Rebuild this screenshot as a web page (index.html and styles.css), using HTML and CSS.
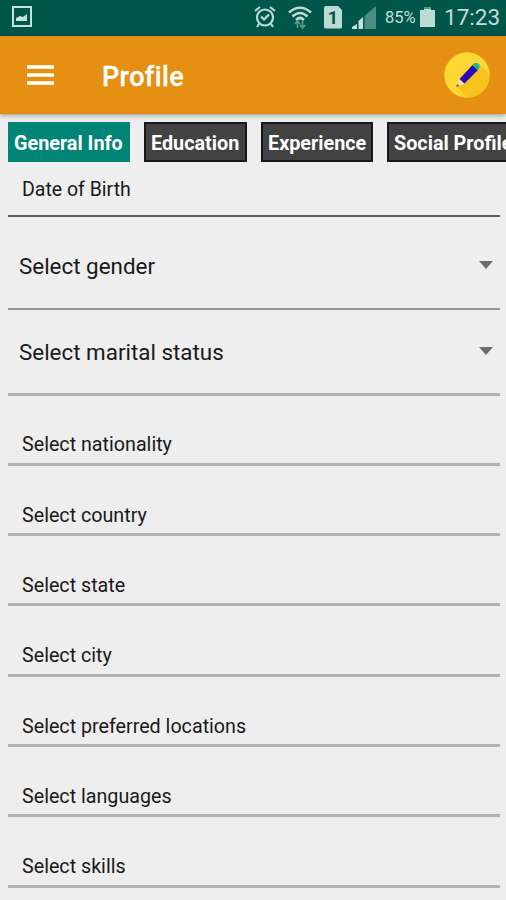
FILE: index.html
```html
<!DOCTYPE html>
<html lang="en">
<head>
<meta charset="utf-8">
<title>Profile</title>
<link rel="stylesheet" href="styles.css">
</head>
<body>
<div class="status">
  <svg class="shot" width="20" height="22" viewBox="0 0 20 22"><path d="M1 2h18v19H1z" fill="none" stroke="#c6e2dc" stroke-width="2"/><path d="M4 16v-3l4-2 3 1 4-3v7z" fill="#c6e2dc"/></svg>
  <div class="indicators">
    <svg class="alarm" width="22" height="24" viewBox="0 0 22 24" fill="none" stroke="#bddbd5" stroke-width="2.200"><circle cx="11" cy="12.500" r="8"/><path d="M7 11.500l3 3 5-5M1 6l5-4M21 6l-5-4M5 19l-2 3M17 19l2 3"/></svg>
    <svg class="wifi" width="24" height="24" viewBox="0 0 24 24" fill="none" stroke="#bddbd5" stroke-width="2.600"><path d="M1 7.500Q12-2 23 7.500M4.500 11.500Q12 4.500 19.500 11.500M8 15Q12 11 16 15"/><path d="M9.500 23v-6M7 19l2.500-3 2.500 3M14.500 16v6M12 20l2.500 3 2.500-3" stroke="#4f9c88" stroke-width="1.800"/></svg>
    <span class="sim">1</span>
    <svg class="signal" width="25" height="23" viewBox="0 0 25 23"><path d="M0 23v-2l5-3v5zM6.500 23v-8l4.500-4v12z" fill="#c6e2dc"/><path d="M12.500 23V10l4.500-4v17zM17 23V6L24 0v23z" fill="#4d8c81"/></svg>
    <span class="percent">85%</span>
    <svg class="battery" width="15" height="20" viewBox="0 0 15 20"><path d="M4 0h7v3h4v17H0V3h4z" fill="#bddbd5"/><path d="M4 0h7v2H4z" fill="#5b988c"/></svg>
    <time class="clock">17:23</time>
  </div>
</div>
<header class="appbar">
  <svg class="menu" width="27" height="20" viewBox="0 0 27 20"><path d="M0 2h27M0 10h27M0 18h27" stroke="#fff" stroke-width="3.600"/></svg>
  <h1>Profile</h1>
  <svg class="edit" width="46" height="46" viewBox="0 0 46 46"><circle cx="23" cy="23" r="22.700" fill="#fdd835"/><path d="M35 12l10.500 10A22.700 22.700 0 0 1 23 45.700L12.500 34z" fill="#f7c41e"/><path d="M12 35l3.500-8 5 4.500z" fill="#f6dfb0"/><path d="M12 35l1.300-3 1.800 1.700z" fill="#555"/><path d="M15.500 27L28.500 13l5.500 5-13.500 13.500z" fill="#2c08b8"/><path d="M28.500 13l2-2h3l2 2v3l-2 2z" fill="#18bd8c"/></svg>
</header>
<nav class="tabs">
  <a class="tab active"><span>General Info</span></a>
  <a class="tab edu"><span>Education</span></a>
  <a class="tab exp"><span>Experience</span></a>
  <a class="tab soc"><span>Social Profile</span></a>
</nav>
<main>
  <div class="field dob"><span>Date of Birth</span></div>
  <div class="field spinner gender"><span>Select gender</span><i class="arrow"></i></div>
  <div class="field spinner marital"><span>Select marital status</span><i class="arrow"></i></div>
  <div class="field"><span>Select nationality</span></div>
  <div class="field"><span>Select country</span></div>
  <div class="field"><span>Select state</span></div>
  <div class="field"><span>Select city</span></div>
  <div class="field"><span>Select preferred locations</span></div>
  <div class="field"><span>Select languages</span></div>
  <div class="field"><span>Select skills</span></div>
</main>
</body>
</html>
```
FILE: styles.css
```css
* { box-sizing: border-box; }
body { margin: 0; width: 506px; height: 900px; overflow: hidden; background: #eee; color: #191919; font-family: Roboto, sans-serif; }
.status { display: flex; justify-content: space-between; align-items: flex-start; height: 36px; background: #00564a; padding: 5px 6px 0 12px; color: #c2ddd8; }
.indicators { display: flex; height: 24px; align-items: center; }
.wifi { margin-left: 12px; }
.sim { margin-left: 12px; width: 18px; height: 23px; background: #bddbd5; color: #00564a; font: 700 18px/23px Roboto, sans-serif; text-align: center; border-radius: 2px; clip-path: polygon(0 0, 75% 0, 100% 20%, 100% 100%, 0 100%); }
.signal { margin-left: 10px; }
.percent { margin-left: 8px; width: 31px; font-size: 16.500px; white-space: nowrap; }
.battery { margin-left: 4px; }
.clock { margin: 0 0 0 9px; width: 56px; font-size: 22.500px; line-height: 24px; }
.appbar { display: flex; align-items: center; height: 78px; background: #e59012; padding: 0 16px 0 27px; box-shadow: 0 1px 5px rgba(0,0,0,.4); }
h1 { margin: 3px 0 0 48px; flex: 1; color: #fff; font-size: 27px; font-weight: 500; letter-spacing: .35px; line-height: 36px; -webkit-text-stroke: .3px #fff; }
.menu { margin-top: -1px; }
.tabs { display: flex; gap: 14px; height: 48px; padding: 8px 0 0 8px; overflow: hidden; }
.tab { flex: none; width: 122px; height: 40px; padding-left: 6px; background: #008577; color: #fff; font-size: 19.800px; font-weight: 700; line-height: 44px; white-space: nowrap; }
.tab:not(.active) { background: #424242; border: 2px solid #181818; padding-left: 5px; line-height: 40px; }
.edu { width: 103px; }
.exp { width: 112px; }
.soc { width: 140px; }
main { padding: 0 6px 0 8px; }
.field { display: flex; align-items: flex-end; height: 70.33px; padding: 0 0 4.500px 14px; border-bottom: 3px solid #b2b2b2; font-size: 19.700px; line-height: 26px; white-space: nowrap; }
.dob { height: 55px; padding-bottom: 12px; border-bottom: 2px solid #5c5c5c; font-size: 19.500px; }
.spinner { align-items: center; justify-content: space-between; font-size: 22.400px; padding: 7px 7px 0 11px; }
.gender { height: 93px; padding-top: 6px; border-bottom: 2px solid #949494; }
.marital { height: 85.500px; padding-top: 2px; }
.arrow { margin-bottom: 2px; border: 7px solid transparent; border-top: 8px solid #6b6b6b; border-bottom: 0; }
```
